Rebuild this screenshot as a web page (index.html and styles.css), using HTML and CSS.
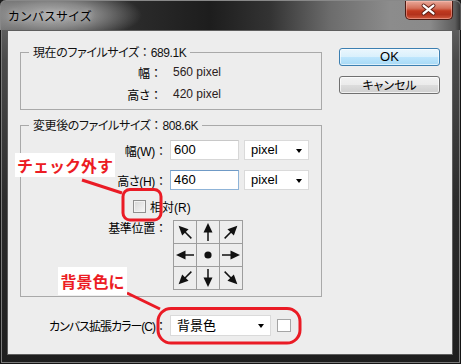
FILE: index.html
```html
<!DOCTYPE html>
<html lang="ja">
<head>
<meta charset="utf-8">
<title>カンバスサイズ</title>
<link rel="stylesheet" href="styles.css">
</head>
<body>
<div class="window">
  <div class="titlebar">
    <span class="title">カンバスサイズ</span>
    <div class="close">
      <svg width="48" height="19" viewBox="0 0 48 19">
        <path d="M19 5.5 L29 13.5 M29 5.5 L19 13.5" stroke="#5a1c12" stroke-width="4.2" stroke-linecap="round"/>
        <path d="M19 5.5 L29 13.5 M29 5.5 L19 13.5" stroke="#ffffff" stroke-width="2.4" stroke-linecap="round"/>
      </svg>
    </div>
  </div>
  <div class="client">
    <div class="main">
      <fieldset class="group g1">
        <legend>現在のファイルサイズ<span class="colon">：</span>689.1K</legend>
        <div class="info-grid">
          <span class="lbl">幅<span class="colon">：</span></span><span class="val">560 pixel</span>
          <span class="lbl">高さ<span class="colon">：</span></span><span class="val">420 pixel</span>
        </div>
      </fieldset>
      <fieldset class="group g2">
        <legend>変更後のファイルサイズ<span class="colon">：</span>808.6K</legend>
        <div class="form">
          <div class="frow">
            <span class="flbl">幅(W)<span class="colon">：</span></span>
            <div class="input">600</div>
            <div class="select unit">pixel<span class="caret"></span></div>
          </div>
          <div class="frow r2">
            <span class="flbl">高さ(H)<span class="colon">：</span></span>
            <div class="input focus">460</div>
            <div class="select unit">pixel<span class="caret"></span></div>
          </div>
          <div class="check-row">
            <span class="checkbox"></span><span>相対(R)</span>
          </div>
          <div class="anchor-row">
            <span class="flbl alabel">基準位置<span class="colon">：</span></span>
            <div class="anchor">
              <div class="cell"><svg width="22" height="22"><g transform="rotate(-45 11 11)"><path d="M11 2 L15.5 11.5 L6.5 11.5 Z"/><rect x="10.25" y="10" width="1.5" height="10"/></g></svg></div>
              <div class="cell"><svg width="22" height="22"><g><path d="M11 2 L15.5 11.5 L6.5 11.5 Z"/><rect x="10.25" y="10" width="1.5" height="10"/></g></svg></div>
              <div class="cell"><svg width="22" height="22"><g transform="rotate(45 11 11)"><path d="M11 2 L15.5 11.5 L6.5 11.5 Z"/><rect x="10.25" y="10" width="1.5" height="10"/></g></svg></div>
              <div class="cell"><svg width="22" height="22"><g transform="rotate(-90 11 11)"><path d="M11 2 L15.5 11.5 L6.5 11.5 Z"/><rect x="10.25" y="10" width="1.5" height="10"/></g></svg></div>
              <div class="cell"><svg width="22" height="22"><circle cx="11" cy="11" r="3.6"/></svg></div>
              <div class="cell"><svg width="22" height="22"><g transform="rotate(90 11 11)"><path d="M11 2 L15.5 11.5 L6.5 11.5 Z"/><rect x="10.25" y="10" width="1.5" height="10"/></g></svg></div>
              <div class="cell"><svg width="22" height="22"><g transform="rotate(-135 11 11)"><path d="M11 2 L15.5 11.5 L6.5 11.5 Z"/><rect x="10.25" y="10" width="1.5" height="10"/></g></svg></div>
              <div class="cell"><svg width="22" height="22"><g transform="rotate(180 11 11)"><path d="M11 2 L15.5 11.5 L6.5 11.5 Z"/><rect x="10.25" y="10" width="1.5" height="10"/></g></svg></div>
              <div class="cell"><svg width="22" height="22"><g transform="rotate(135 11 11)"><path d="M11 2 L15.5 11.5 L6.5 11.5 Z"/><rect x="10.25" y="10" width="1.5" height="10"/></g></svg></div>
            </div>
          </div>
        </div>
      </fieldset>
      <div class="ext-row">
        <span class="elbl">カンバス拡張カラー(C)<span class="colon">：</span></span>
        <div class="select ext">背景色<span class="caret"></span></div>
        <span class="swatch"></span>
      </div>
    </div>
    <div class="buttons">
      <div class="btn ok">OK</div>
      <div class="btn">キャンセル</div>
    </div>
  </div>

  <svg class="annot" width="461" height="364" viewBox="0 0 461 364">
    <line x1="82" y1="180" x2="122" y2="193"/>
    <rect x="123" y="189.5" width="38" height="30.5" rx="7"/>
    <line x1="127" y1="293" x2="160" y2="309"/>
    <rect x="158" y="308.5" width="142" height="34.5" rx="13"/>
  </svg>
  <div class="note note1">チェック外す</div>
  <div class="note note2">背景色に</div>
</div>
</body>
</html>
```
FILE: styles.css
```css
html, body {
  margin: 0;
  padding: 0;
}
body {
  width: 461px;
  height: 364px;
  overflow: hidden;
  background: #1c1c1c;
  font-family: "Liberation Sans", "Noto Sans CJK JP", sans-serif;
  font-size: 12px;
  color: #000;
  font-feature-settings: "palt";
}
.window {
  position: relative;
  width: 461px;
  height: 364px;
  box-sizing: border-box;
  display: flex;
  flex-direction: column;
  border-radius: 6px 6px 0 0;
  background: linear-gradient(to bottom, #707070 0, #4a4a4a 60px, #2c2c2c 200px, #1e1e1e 364px);
  box-shadow: inset 0 0 0 1px #151515, inset 0 0 0 2px #7a7a7a;
}
.titlebar {
  height: 30px;
  flex: none;
  display: flex;
  align-items: flex-start;
  border-radius: 6px 6px 0 0;
  background:
    radial-gradient(ellipse 90px 26px at 52px 15px, rgba(175,175,175,1) 0, rgba(150,150,150,.85) 45%, rgba(120,120,120,0) 100%),
    linear-gradient(to right, #6a6a6a 0, #555 20px, #2a2a2a 140px, #1d1d1d 210px, #333 270px, #6c6c6c 330px, #8c8c8c 390px, #8a8a8a 430px, #5c5c5c 455px, #2e2e2e 461px);
  box-shadow: inset 0 1px 0 #888, inset 1px 0 0 #888, inset -1px 0 0 #555;
}
.title {
  font-family: "Noto Sans CJK JP", sans-serif;
  font-feature-settings: normal;
  font-size: 12px;
  line-height: 16px;
  margin: 8px 0 0 8px;
  color: #000;
  text-shadow: 0 0 6px rgba(220,220,220,.9);
}
.close {
  margin: 1px 8px 0 auto;
  width: 48px;
  height: 19px;
  box-sizing: border-box;
  border: 1px solid #4b1a12;
  border-top: none;
  border-radius: 0 0 5px 5px;
  background: linear-gradient(to bottom, #e9a99a 0, #d4705a 40%, #c0391f 55%, #b3321c 75%, #d05a3e 100%);
  box-shadow: inset 0 0 0 1px rgba(255,200,190,.45);
  display: flex;
}
.close svg { display: block; margin: -1px 0 0 -1px; }

.client {
  flex: 1;
  margin: 0 8px 9px 7px;
  box-sizing: border-box;
  border: 1px solid #5e5e5e;
  background: #ededed;
  display: flex;
  padding: 13px 12px 0 12px;
  gap: 17px;
}
.main {
  width: 302px;
  flex: none;
  display: flex;
  flex-direction: column;
}
.colon { font-feature-settings: normal; font-family: "Noto Sans CJK JP", sans-serif; letter-spacing: 0; }

.group {
  width: 302px;
  box-sizing: border-box;
  margin: 0;
  padding: 0 8px;
  border: 1px solid #a9a9a9;
  min-width: 0;
}
.group legend {
  padding: 0 4px;
  height: 16px;
  line-height: 16px;
  color: #111;
  letter-spacing: -0.4px;
}
.info-grid {
  display: grid;
  grid-template-columns: 133px auto;
  column-gap: 11px;
  grid-auto-rows: 22px;
  align-items: center;
  padding: 1px 0 4px;
}
.lbl { text-align: right; }
.val { color: #2a2020; }

.g2 { margin-top: 7px; }
.form {
  display: flex;
  flex-direction: column;
  padding: 7px 0 6px;
}
.frow {
  display: flex;
  align-items: center;
  height: 20px;
}
.frow.r2 { margin-top: 10px; }
.flbl {
  width: 138px;
  flex: none;
  text-align: right;
  margin-right: 3px;
  letter-spacing: -0.3px;
}
.input {
  width: 69px;
  height: 20px;
  box-sizing: border-box;
  background: #fff;
  border: 1px solid #d7d7d7;
  border-top-color: #c8c8c8;
  padding: 0 0 0 3px;
  line-height: 18px;
  font-size: 13px;
}
.input.focus { border-color: #8fb4d8; border-top-color: #6f9ac6; }
.select {
  position: relative;
  height: 20px;
  box-sizing: border-box;
  background: #fff;
  border: 1px solid #dadada;
  line-height: 18px;
  padding-left: 6px;
  font-size: 13px;
}
.select.unit { width: 65px; margin-left: 5px; }
.caret {
  position: absolute;
  right: 6px;
  top: 8px;
  width: 0;
  height: 0;
  border-left: 3.5px solid transparent;
  border-right: 3.5px solid transparent;
  border-top: 4px solid #000;
}
.check-row {
  display: flex;
  align-items: center;
  height: 20px;
  margin-top: 6px;
  padding-left: 104px;
  gap: 4px;
}
.checkbox {
  width: 13px;
  height: 13px;
  box-sizing: border-box;
  border: 1px solid #8f8f8f;
  background: linear-gradient(135deg, #d6d6d6, #f7f7f7);
  box-shadow: inset 0 0 0 1px #f2f2f2;
}
.anchor-row {
  display: flex;
  align-items: flex-start;
  margin-top: 4px;
}
.alabel { line-height: 16px; margin-top: 0; margin-right: 6px; }
.anchor {
  display: grid;
  grid-template-columns: repeat(3, 22px);
  grid-template-rows: repeat(3, 22px);
  gap: 1px;
  padding: 1px;
  background: #9d9d9d;
}
.cell { background: #ededed; }
.cell svg { display: block; fill: #111; }

.ext-row {
  display: flex;
  align-items: center;
  margin-top: 18px;
  height: 21px;
}
.elbl {
  width: 147px;
  text-align: right;
  margin-right: 3px;
  flex: none;
  letter-spacing: -1px;
}
.select.ext { width: 101px; height: 21px; line-height: 19px; padding-left: 6px; }
.swatch {
  width: 14px;
  height: 13px;
  box-sizing: border-box;
  margin-left: 6px;
  background: #fff;
  border: 1px solid #a5a5a5;
}

.buttons {
  width: 101px;
  flex: none;
  display: flex;
  flex-direction: column;
  gap: 10px;
  margin-top: 4px;
}
.btn {
  height: 18px;
  box-sizing: border-box;
  border: 1px solid #707070;
  border-radius: 3px;
  background: linear-gradient(to bottom, #f2f2f2 0, #ebebeb 50%, #dddddd 50%, #cfcfcf 100%);
  box-shadow: inset 0 0 0 1px rgba(255,255,255,.7);
  text-align: center;
  line-height: 16px;
  font-family: "Noto Sans CJK JP", sans-serif;
}
.btn.ok {
  border-color: #3c7fb1;
  background: linear-gradient(to bottom, #eaf6fd 0, #d9f0fc 50%, #bee6fd 50%, #a7d9f5 100%);
  box-shadow: inset 0 0 0 1px rgba(255,255,255,.6);
  font-family: "Liberation Sans", sans-serif;
  font-size: 13px;
}

.annot {
  position: absolute;
  left: 0;
  top: 0;
  pointer-events: none;
  fill: none;
  stroke: #ea1b25;
  stroke-width: 3;
}
.note {
  position: absolute;
  background: #fff;
  color: #ec1c24;
  font-family: "Noto Sans CJK JP", sans-serif;
  font-weight: 700;
  font-size: 16px;
  font-feature-settings: normal;
  text-align: center;
}
.note1 { left: 15px; top: 153px; width: 100px; height: 24px; line-height: 24px; }
.note2 { left: 58px; top: 267px; width: 69px; height: 28px; line-height: 28px; }
```
